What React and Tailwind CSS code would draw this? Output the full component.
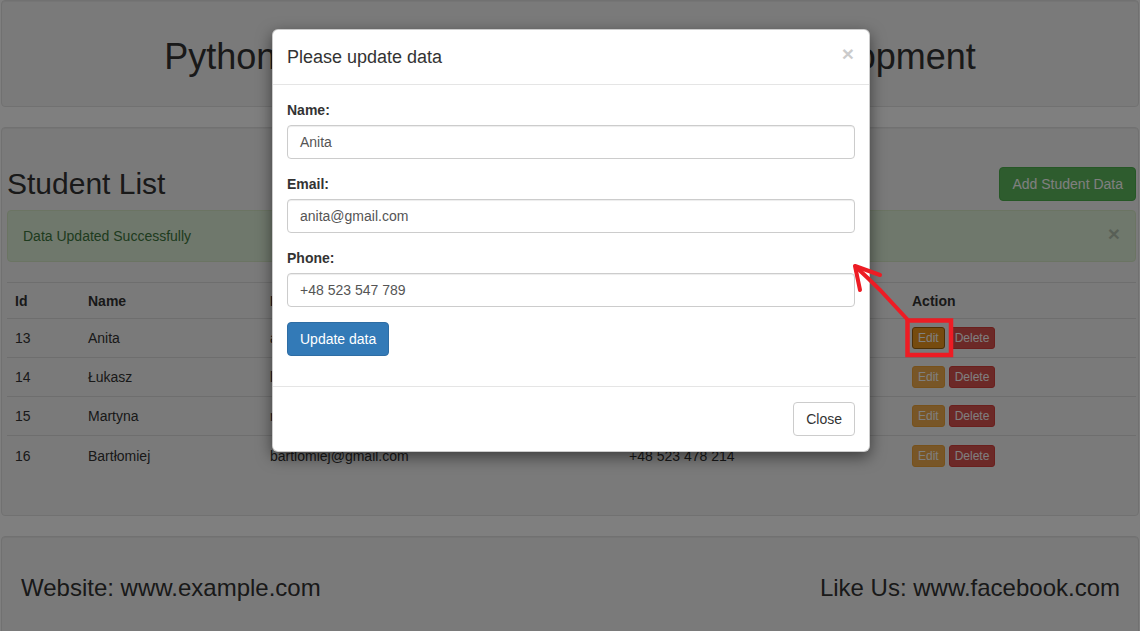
import React from 'react';

const students = [
  { id: 13, name: 'Anita', email: 'anita@gmail.com', phone: '+48 523 547 789' },
  { id: 14, name: 'Łukasz', email: 'lukasz@gmail.com', phone: '+48 523 112 456' },
  { id: 15, name: 'Martyna', email: 'martyna@gmail.com', phone: '+48 523 698 321' },
  { id: 16, name: 'Bartłomiej', email: 'bartlomiej@gmail.com', phone: '+48 523 478 214' },
];

const well = 'bg-[#f5f5f5] border border-[#e3e3e3] rounded-[4px] shadow-[inset_0_1px_1px_rgba(0,0,0,0.05)]';
const cols = 'grid grid-cols-[73px_182px_359px_283px_1fr]';

const Field = ({ label, value }) => (
  <div className="mb-[15px]">
    <label className="block text-[14px] leading-[20px] font-bold text-[#333] mb-[5px]">{label}</label>
    <div className="h-[34px] flex items-center px-[12px] border border-[#ccc] rounded-[4px] shadow-[inset_0_1px_1px_rgba(0,0,0,0.075)] text-[14px] text-[#555]">
      {value}
    </div>
  </div>
);

const App = () => {
  return (
    <div className="relative w-[1140px] h-[631px] overflow-hidden bg-white text-[#333] font-['Liberation_Sans',Arial,sans-serif] text-[14px] leading-[20px]">
      {/* page underneath */}
      <div className="px-[1px]">
        <div className={`${well} pt-[36px] pb-[29px] text-center`}>
          <h1 className="text-[36px] leading-[40px]">Python Flask CRUD Web Application Development</h1>
        </div>

        <div className={`${well} mt-[20px] pt-[39px] pb-[40px] pl-[5px] pr-[2px]`}>
          <div className="flex justify-between items-start h-[34px] mb-[9px]">
            <h2 className="text-[30px] leading-[34px]">Student List</h2>
            <button className="h-[34px] px-[12px] bg-[#5cb85c] border border-[#4cae4c] rounded-[4px] text-white text-[14px]">
              Add Student Data
            </button>
          </div>

          <div className="relative h-[52px] flex items-center pl-[15px] bg-[#dff0d8] border border-[#d6e9c6] rounded-[4px] text-[#3c763d]">
            Data Updated Successfully
            <span className="absolute right-[15px] top-[12px] text-[21px] leading-[21px] font-bold text-black opacity-20">×</span>
          </div>

          <div className="mt-[20px] border-t border-[#ddd]">
            <div className={`${cols} h-[36px] items-center border-b border-[#ddd] font-bold`}>
              <div className="px-[8px]">Id</div>
              <div className="px-[8px]">Name</div>
              <div className="px-[8px]">Email</div>
              <div className="px-[8px]">Phone</div>
              <div className="px-[8px]">Action</div>
            </div>
            {students.map((s, i) => (
              <div key={s.id} className={`${cols} h-[39px] items-center ${i < students.length - 1 ? 'border-b border-[#ddd]' : ''}`}>
                <div className="px-[8px]">{s.id}</div>
                <div className="px-[8px]">{s.name}</div>
                <div className="px-[8px]">{s.email}</div>
                <div className="px-[8px]">{s.phone}</div>
                <div className="px-[8px] flex items-center gap-[4px]">
                  <button className={`h-[22px] px-[5px] rounded-[3px] text-white text-[12px] leading-[18px] border ${i === 0 ? 'bg-[#ec971f] border-[#985f0d]' : 'bg-[#f0ad4e] border-[#eea236]'}`}>
                    Edit
                  </button>
                  <button className="h-[22px] px-[5px] rounded-[3px] bg-[#d9534f] border border-[#d43f3a] text-white text-[12px] leading-[18px]">
                    Delete
                  </button>
                </div>
              </div>
            ))}
          </div>
        </div>

        <div className={`${well} mt-[20px] pt-[38px] pb-[40px] pl-[19px] pr-[18px] flex justify-between`}>
          <h3 className="text-[24px] leading-[26px]">Website: www.example.com</h3>
          <h3 className="text-[24px] leading-[26px]">Like Us: www.facebook.com</h3>
        </div>
      </div>

      {/* backdrop */}
      <div className="absolute inset-0 bg-black/50" />

      {/* modal */}
      <div className="absolute left-[272px] top-[29px] w-[598px] bg-white border border-black/20 rounded-[6px] shadow-[0_5px_15px_rgba(0,0,0,0.5)]">
        <div className="flex justify-between items-start py-[15px] pl-[14px] pr-[15px] border-b border-[#e5e5e5]">
          <h4 className="text-[18px] leading-[24px] text-[#333]">Please update data</h4>
          <span className="mt-[-2px] text-[21px] leading-[21px] font-bold text-black opacity-20">×</span>
        </div>
        <div className="px-[14px] pt-[15px] pb-[30px]">
          <Field label="Name:" value="Anita" />
          <Field label="Email:" value="anita@gmail.com" />
          <Field label="Phone:" value="+48 523 547 789" />
          <button className="h-[34px] px-[12px] bg-[#337ab7] border border-[#2e6da4] rounded-[4px] text-white text-[14px]">
            Update data
          </button>
        </div>
        <div className="flex justify-end p-[15px] pr-[14px] border-t border-[#e5e5e5]">
          <button className="h-[34px] px-[12px] bg-white border border-[#ccc] rounded-[4px] text-[#333] text-[14px]">
            Close
          </button>
        </div>
      </div>

      {/* red annotation */}
      <svg className="absolute inset-0 pointer-events-none" width="1140" height="631" viewBox="0 0 1140 631">
        <rect x="907.5" y="320.5" width="43.5" height="34.5" fill="none" stroke="#ed1c24" strokeWidth="4.5" />
        <path d="M907 319 L880 290 Q868 278 856 267" fill="none" stroke="#ed1c24" strokeWidth="4" strokeLinecap="round" />
        <path d="M880 275 L855 266 L860 290" fill="none" stroke="#ed1c24" strokeWidth="4" strokeLinecap="round" strokeLinejoin="round" />
      </svg>
    </div>
  );
};

export default App;
